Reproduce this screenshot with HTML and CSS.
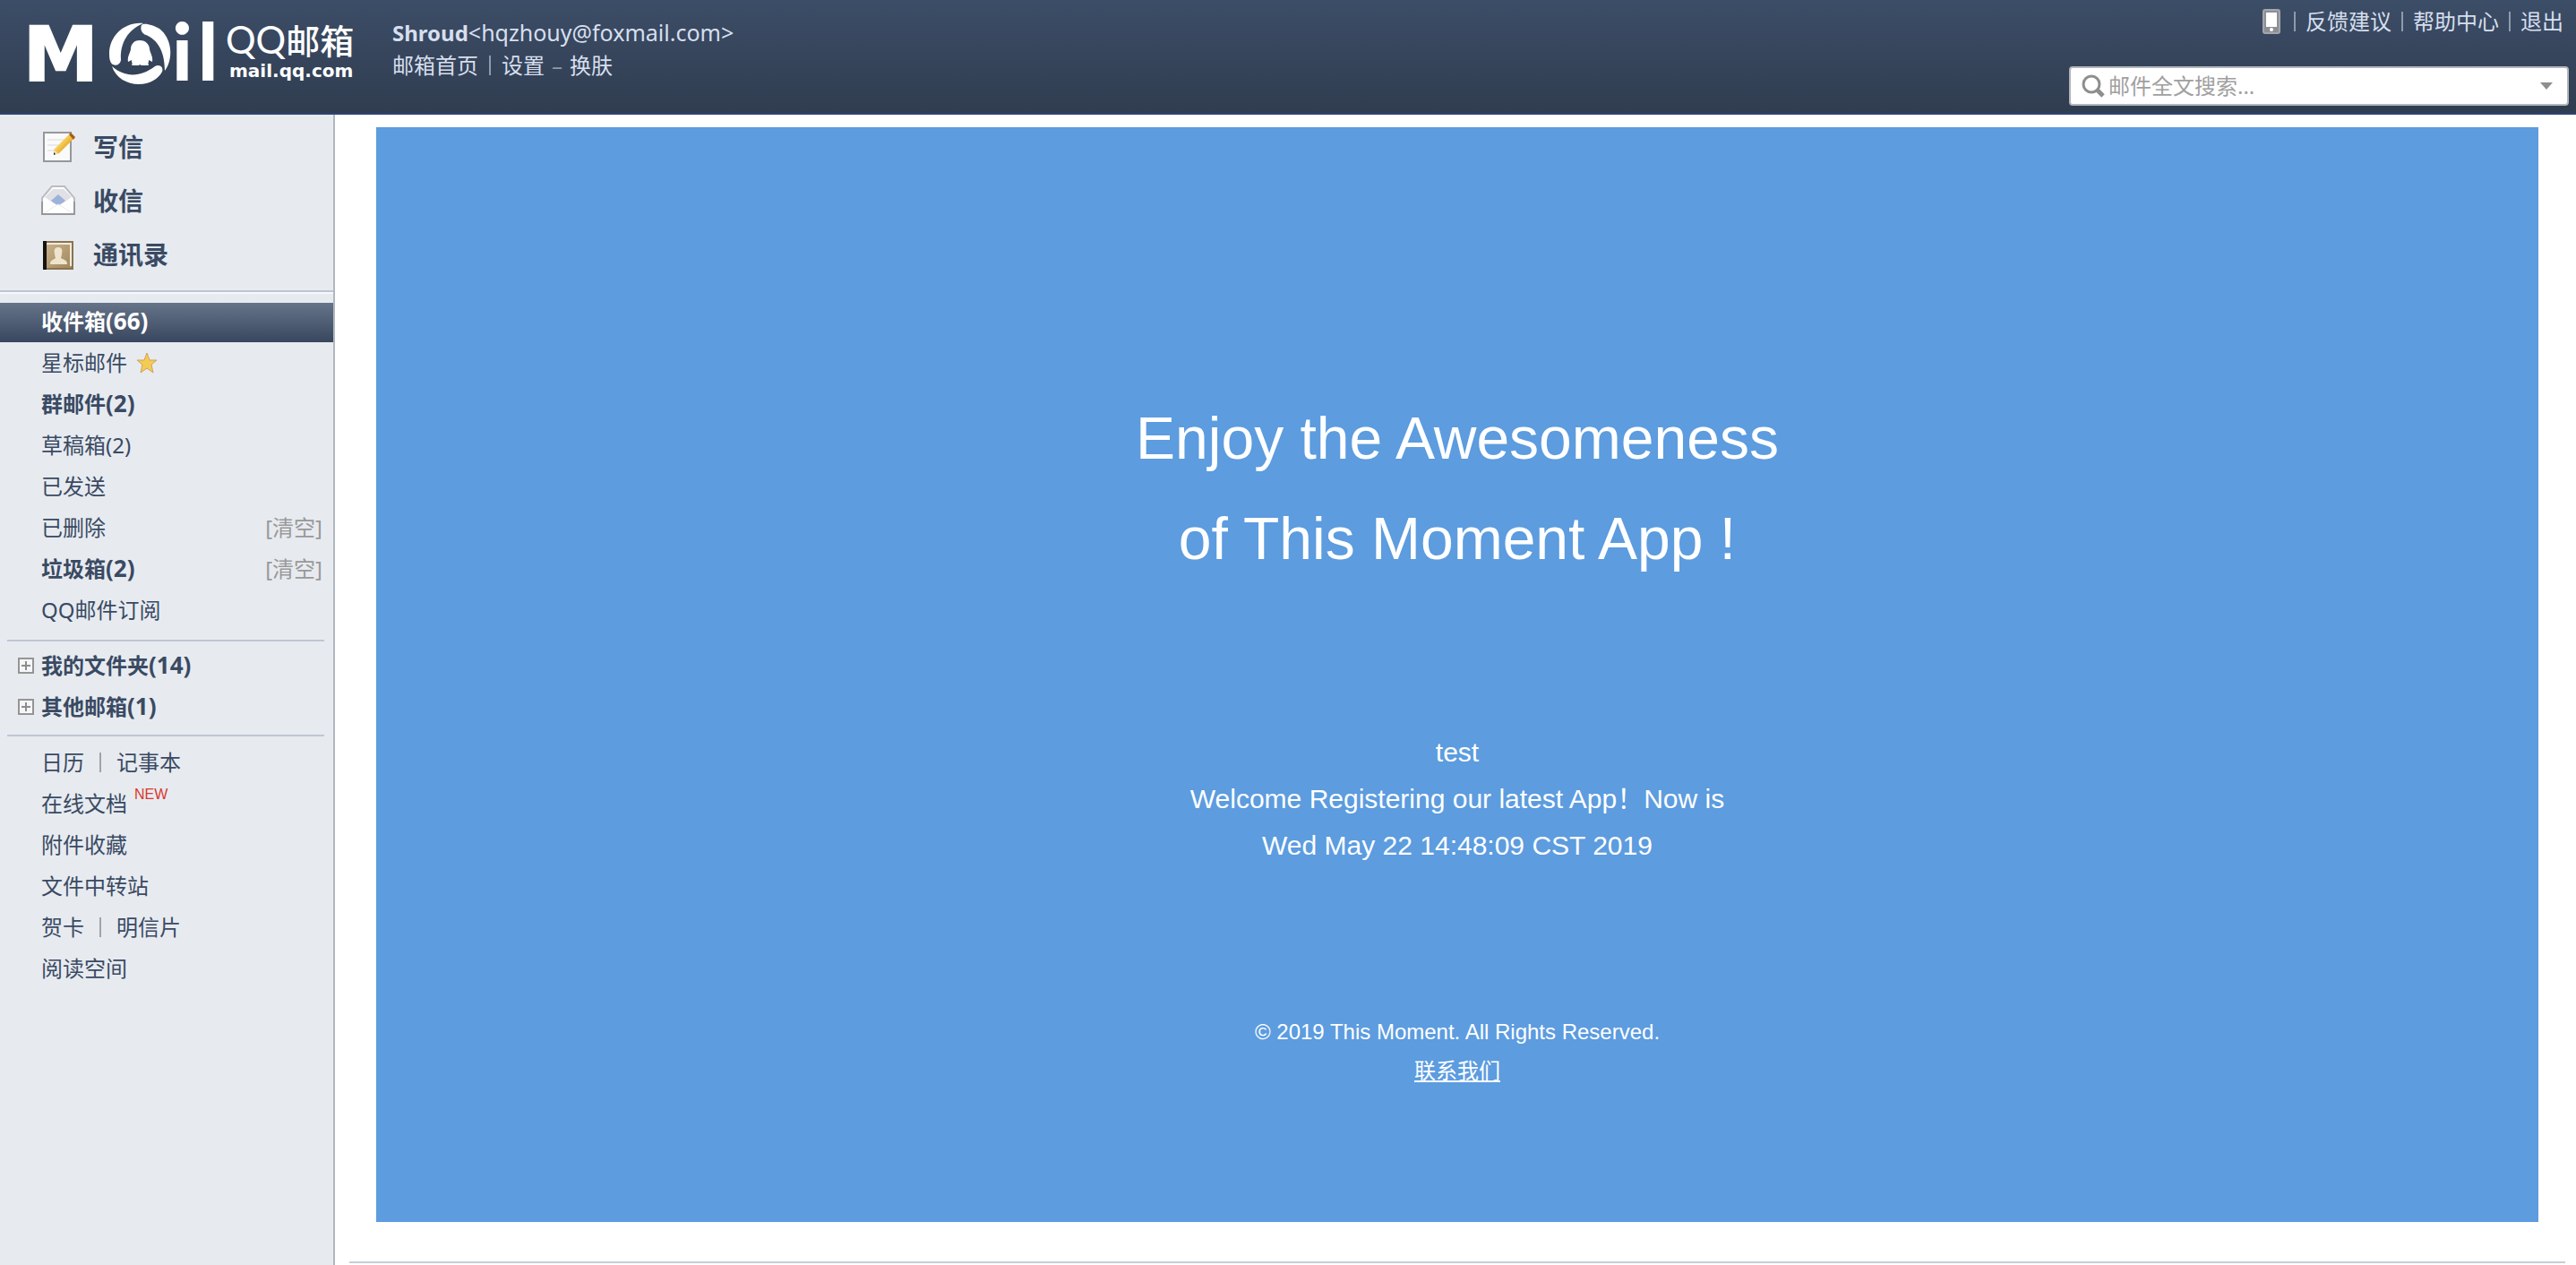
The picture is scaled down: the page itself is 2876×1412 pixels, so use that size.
FILE: index.html
```html
<!DOCTYPE html>
<html lang="zh-CN">
<head>
<meta charset="utf-8">
<title>QQ邮箱</title>
<link rel="stylesheet" href="styles.css">
</head>
<body>
<header class="topbar">
  <a class="logo" href="#">
    <svg width="400" height="126" viewBox="0 0 400 126" role="img" aria-label="QQ邮箱 mail.qq.com" fill="#fff">
      <text class="logo-m" x="26" y="90">M</text>
      <g>
        <path d="M160 26C139 24 122 40 122 60C122 66 123 70 126 72C131 74 135 71 135 66C134 48 143 33 160 26Z"/>
        <path d="M158 28C156 33 159 38 163 39C175 44 184 56 184 79C194 65 192 43 178 32C171 28 161 25 158 28Z"/>
        <path d="M125 74C129 87 142 94 155 94C167 94 177 88 181 80C183 75 178 71 173 74C157 86 140 87 125 74Z"/>
        <path d="M156 45c-7 0-10 5-10 10-1 5-4 8-3 14l4-2c0 2 0 3 1 4-2 1-1 2 1 2h6l1-1 2 1h6c2 0 3-1 1-2 1-1 1-2 1-4l4 2c1-6-2-9-3-14 0-5-4-10-11-10Z"/>
      </g>
      <text class="logo-il" x="192" y="90">i</text>
      <text class="logo-il" x="221" y="90">l</text>
      <text x="252" y="60"><tspan class="logo-qq">QQ</tspan><tspan class="logo-cn">邮箱</tspan></text>
      <text class="logo-url" x="256" y="86">mail.qq.com</text>
    </svg>
  </a>
  <div class="account">
    <div><b>Shroud</b><span class="address">&lt;hqzhouy@foxmail.com&gt;</span></div>
    <nav class="account-links">
      <a href="#">邮箱首页</a><i class="bar"></i><a href="#">设置</a><span class="dash">–</span><a href="#">换肤</a>
    </nav>
  </div>
  <div class="tools">
    <nav class="tool-links">
      <a class="phone" href="#" aria-label="手机版">
        <svg width="20" height="28" viewBox="0 0 20 28"><rect x="1" y="1" width="18" height="26" rx="2" fill="#8c9094" stroke="#a3a6aa" stroke-width="2"/><rect x="4" y="4" width="12" height="16" fill="#fff"/><circle cx="10" cy="23" r="2" fill="#fff"/></svg>
      </a><i class="bar"></i><a href="#">反馈建议</a><i class="bar"></i><a href="#">帮助中心</a><i class="bar"></i><a href="#">退出</a>
    </nav>
    <form class="search">
      <svg width="26" height="26" viewBox="0 0 26 26" fill="none" stroke="#8e8e8e"><circle cx="11" cy="11" r="9" stroke-width="3"/><path d="M17 17l7 7" stroke-width="5"/></svg>
      <input type="text" placeholder="邮件全文搜索..." aria-label="邮件全文搜索">
      <button type="button" aria-label="搜索选项"><svg width="14" height="8" viewBox="0 0 14 8"><path d="M0 0h14L7 8z" fill="#8e8e8e"/></svg></button>
    </form>
  </div>
</header>
<div class="layout">
  <aside class="sidebar">
    <nav class="primary">
      <a href="#">
        <svg width="38" height="38" viewBox="0 0 38 38">
          <defs><linearGradient id="pencil" x1="0" y1="0" x2="1" y2="1"><stop offset="0.3" stop-color="#fbe071"/><stop offset="0.7" stop-color="#e3a01c"/></linearGradient></defs>
          <rect x="3" y="3" width="30" height="32" fill="#fafafb" stroke="#96979b" stroke-width="2"/>
          <path d="M7 11h20M7 17h14M7 23h8" stroke="#d8dade"/>
          <path d="M14 22L31 5l5 5L20 26l-6 2z" fill="url(#pencil)"/>
          <path d="M31 5l2-2 5 5-2 3z" fill="#a85c17"/><path d="M14 22l5 4-5 2z" fill="#f3dcae"/><path d="M14 25l2 2-2 1z" fill="#222"/>
        </svg>写信</a>
      <a href="#">
        <svg width="38" height="38" viewBox="0 0 38 38">
          <path d="M1 16L12 3h14l11 13v18H1z" fill="#fdfdfe" stroke="#bbbdc2" stroke-width="2"/>
          <path d="M4 15L13 6h12l9 9-10 7H14z" fill="#dfe1e5"/>
          <path d="M19 12l8 7-8 6-8-6z" fill="#9cb2da"/><path d="M3 33l16-10 16 10" fill="#fff" stroke="#ececef"/>
          <path d="M1 20v14h36V20" fill="none" stroke="#96989d" stroke-width="2"/>
        </svg>收信</a>
      <a href="#">
        <svg width="38" height="38" viewBox="0 0 38 38">
          <defs><linearGradient id="book" x1="0" y1="0" x2="1" y2="1"><stop offset="0" stop-color="#c9b28c"/><stop offset="1" stop-color="#a1875c"/></linearGradient></defs>
          <rect x="2" y="4" width="34" height="32" fill="#8a7350"/><rect x="6" y="6" width="28" height="28" fill="url(#book)"/>
          <path d="M4 7h30M33 6v26" stroke="#f2ebdb" stroke-width="2"/><rect x="2" y="4" width="4" height="32" fill="#16130f"/>
          <path d="M19 11c4 0 5 3 4 7 0 3-1 4-1 5 3 2 7 2 7 7H10c0-5 4-5 6-7 0-1-1-2-1-5-1-4 0-7 4-7z" fill="#eee4ce"/>
        </svg>通讯录</a>
    </nav>
    <nav class="folders">
      <div class="row current"><a href="#">收件箱<span class="count">(66)</span></a></div>
      <div class="row"><a href="#">星标邮件</a><svg class="star" width="24" height="24" viewBox="0 0 24 24"><path d="M12 1l3 8h8l-6 5 2 9-7-5-7 5 2-9-6-5h8z" fill="#f2cc55" stroke="#d59f55"/></svg></div>
      <div class="row unread"><a href="#">群邮件<span class="count">(2)</span></a></div>
      <div class="row"><a href="#">草稿箱(2)</a></div>
      <div class="row"><a href="#">已发送</a></div>
      <div class="row"><a href="#">已删除</a><a class="clear" href="#">[清空]</a></div>
      <div class="row unread"><a href="#">垃圾箱<span class="count">(2)</span></a><a class="clear" href="#">[清空]</a></div>
      <div class="row"><a href="#">QQ邮件订阅</a></div>
    </nav>
    <nav class="group">
      <div class="row unread tree"><button type="button" class="expand" aria-label="展开"><svg width="18" height="18" viewBox="0 0 18 18"><path d="M1 1h16v16H1z" fill="#f5f6f7" stroke="#959595" stroke-width="2"/><path d="M4 9h10M9 4v10" stroke="#8c8c8c" stroke-width="2"/></svg></button><a href="#">我的文件夹<span class="count">(14)</span></a></div>
      <div class="row unread tree"><button type="button" class="expand" aria-label="展开"><svg width="18" height="18" viewBox="0 0 18 18"><path d="M1 1h16v16H1z" fill="#f5f6f7" stroke="#959595" stroke-width="2"/><path d="M4 9h10M9 4v10" stroke="#8c8c8c" stroke-width="2"/></svg></button><a href="#">其他邮箱<span class="count">(1)</span></a></div>
    </nav>
    <nav class="group extras">
      <div class="row"><a href="#">日历</a><i class="bar"></i><a href="#">记事本</a></div>
      <div class="row"><a href="#">在线文档</a><span class="new">NEW</span></div>
      <div class="row"><a href="#">附件收藏</a></div>
      <div class="row"><a href="#">文件中转站</a></div>
      <div class="row"><a href="#">贺卡</a><i class="bar"></i><a href="#">明信片</a></div>
      <div class="row"><a href="#">阅读空间</a></div>
    </nav>
  </aside>
  <main class="content">
    <article class="mail">
      <h1>Enjoy the Awesomeness<br>of This Moment App !</h1>
      <p class="message">test<br>Welcome Registering our latest App！Now is<br>Wed May 22 14:48:09 CST 2019</p>
      <footer>© 2019 This Moment. All Rights Reserved.<br><a href="#">联系我们</a></footer>
    </article>
  </main>
</div>
</body>
</html>
```
FILE: styles.css
```css
* { box-sizing: border-box; }
body {
  margin: 0;
  min-height: 100vh;
  display: flex;
  flex-direction: column;
  background: #fff;
  font: 24px/36px "Noto Sans", "Noto Sans CJK SC", sans-serif;
  color: #3a4a63;
}
a { color: inherit; text-decoration: none; }
button { padding: 0; border: 0; background: none; display: flex; }
svg { display: block; flex: none; }
.bar { width: 2px; height: 22px; background: #8f9aab; flex: none; }

.topbar {
  display: flex;
  height: 128px;
  padding-right: 8px;
  border-bottom: 2px solid #2e4275;
  background: linear-gradient(#3c4d67, #303d50);
  color: #d6dfee;
}
.logo-m { font: bold 84px "DejaVu Sans", sans-serif; stroke: #fff; stroke-width: 2px; }
.logo-il { font: 900 88px Lato, sans-serif; }
.logo-qq { font: 42px Lato, sans-serif; }
.logo-cn { font: 500 38px "Noto Sans CJK SC", sans-serif; }
.logo-url { font: bold 20px "DejaVu Sans", sans-serif; }
.account { padding: 18px 0 0 38px; }
.address { font-size: 25px; }
.account-links { display: flex; align-items: center; gap: 12px; }
.dash { color: #8f9aab; margin: 0 -4px; }
.tools { margin-left: auto; width: 558px; padding-top: 6px; }
.tool-links { display: flex; align-items: center; justify-content: flex-end; gap: 11px; padding-right: 6px; }
.phone { margin-right: 4px; }
.search {
  display: flex;
  align-items: center;
  gap: 4px;
  height: 44px;
  margin-top: 32px;
  padding: 0 16px 0 12px;
  border: 2px solid #b4b7bc;
  border-radius: 4px;
  background: #fff;
}
.search input { flex: 1; min-width: 0; padding: 0; border: 0; outline: 0; background: none; font: inherit; color: #333; }
.search input::placeholder { color: #a0a0a0; opacity: 1; }

.layout { flex: 1; display: grid; grid-template-columns: 374px 1fr; }
.sidebar { background: #e7ebf0; border-right: 2px solid #b1b7bf; }
.primary { padding: 6px 0 10px; border-bottom: 2px solid #bec6d4; font-size: 28px; font-weight: bold; }
.primary a { display: flex; align-items: center; gap: 20px; height: 60px; padding-left: 46px; }
.folders { padding: 10px 0 8px; border-top: 2px solid #f6f8fa; }
.row { display: flex; align-items: center; height: 44px; margin-bottom: 2px; padding: 0 12px 2px 46px; }
.current { background: linear-gradient(#66748a, #38475e); color: #fff; font-weight: bold; }
.unread { font-weight: bold; }
.count { font-size: 26px; line-height: 24px; }
.star { margin-left: 10px; }
.clear { margin-left: auto; color: #999; font-weight: normal; }
.group { padding-bottom: 7px; }
.group::before { content: ""; display: block; height: 2px; margin: 0 10px 6px 8px; background: #bec6d4; }
.extras::before { margin-bottom: 8px; }
.group + .extras { margin-top: -1px; }
.tree { padding-left: 20px; gap: 8px; }
.extras .bar { margin: 0 17px; background: #a0a3a8; }
.new { margin: 0 0 20px 8px; font: 16px/20px "Liberation Sans", sans-serif; color: #d8382c; }

.content { padding: 14px 12px 0 16px; }
.content::after { content: ""; display: block; height: 2px; margin-top: 44px; background: #c8cdd3; }
.mail {
  margin: 0 30px;
  padding: 291px 20px 146px;
  background: #5c9cdf;
  color: #fff;
  text-align: center;
  font-family: "Liberation Sans", "Noto Sans CJK SC", sans-serif;
}
.mail h1 { margin: 0 0 157px; font-size: 66px; font-weight: normal; line-height: 112px; }
.message { margin: 0 0 160px; font-size: 30px; line-height: 52px; }
.mail footer { font-size: 24px; line-height: 44px; }
.mail footer a { text-decoration: underline; }
```
